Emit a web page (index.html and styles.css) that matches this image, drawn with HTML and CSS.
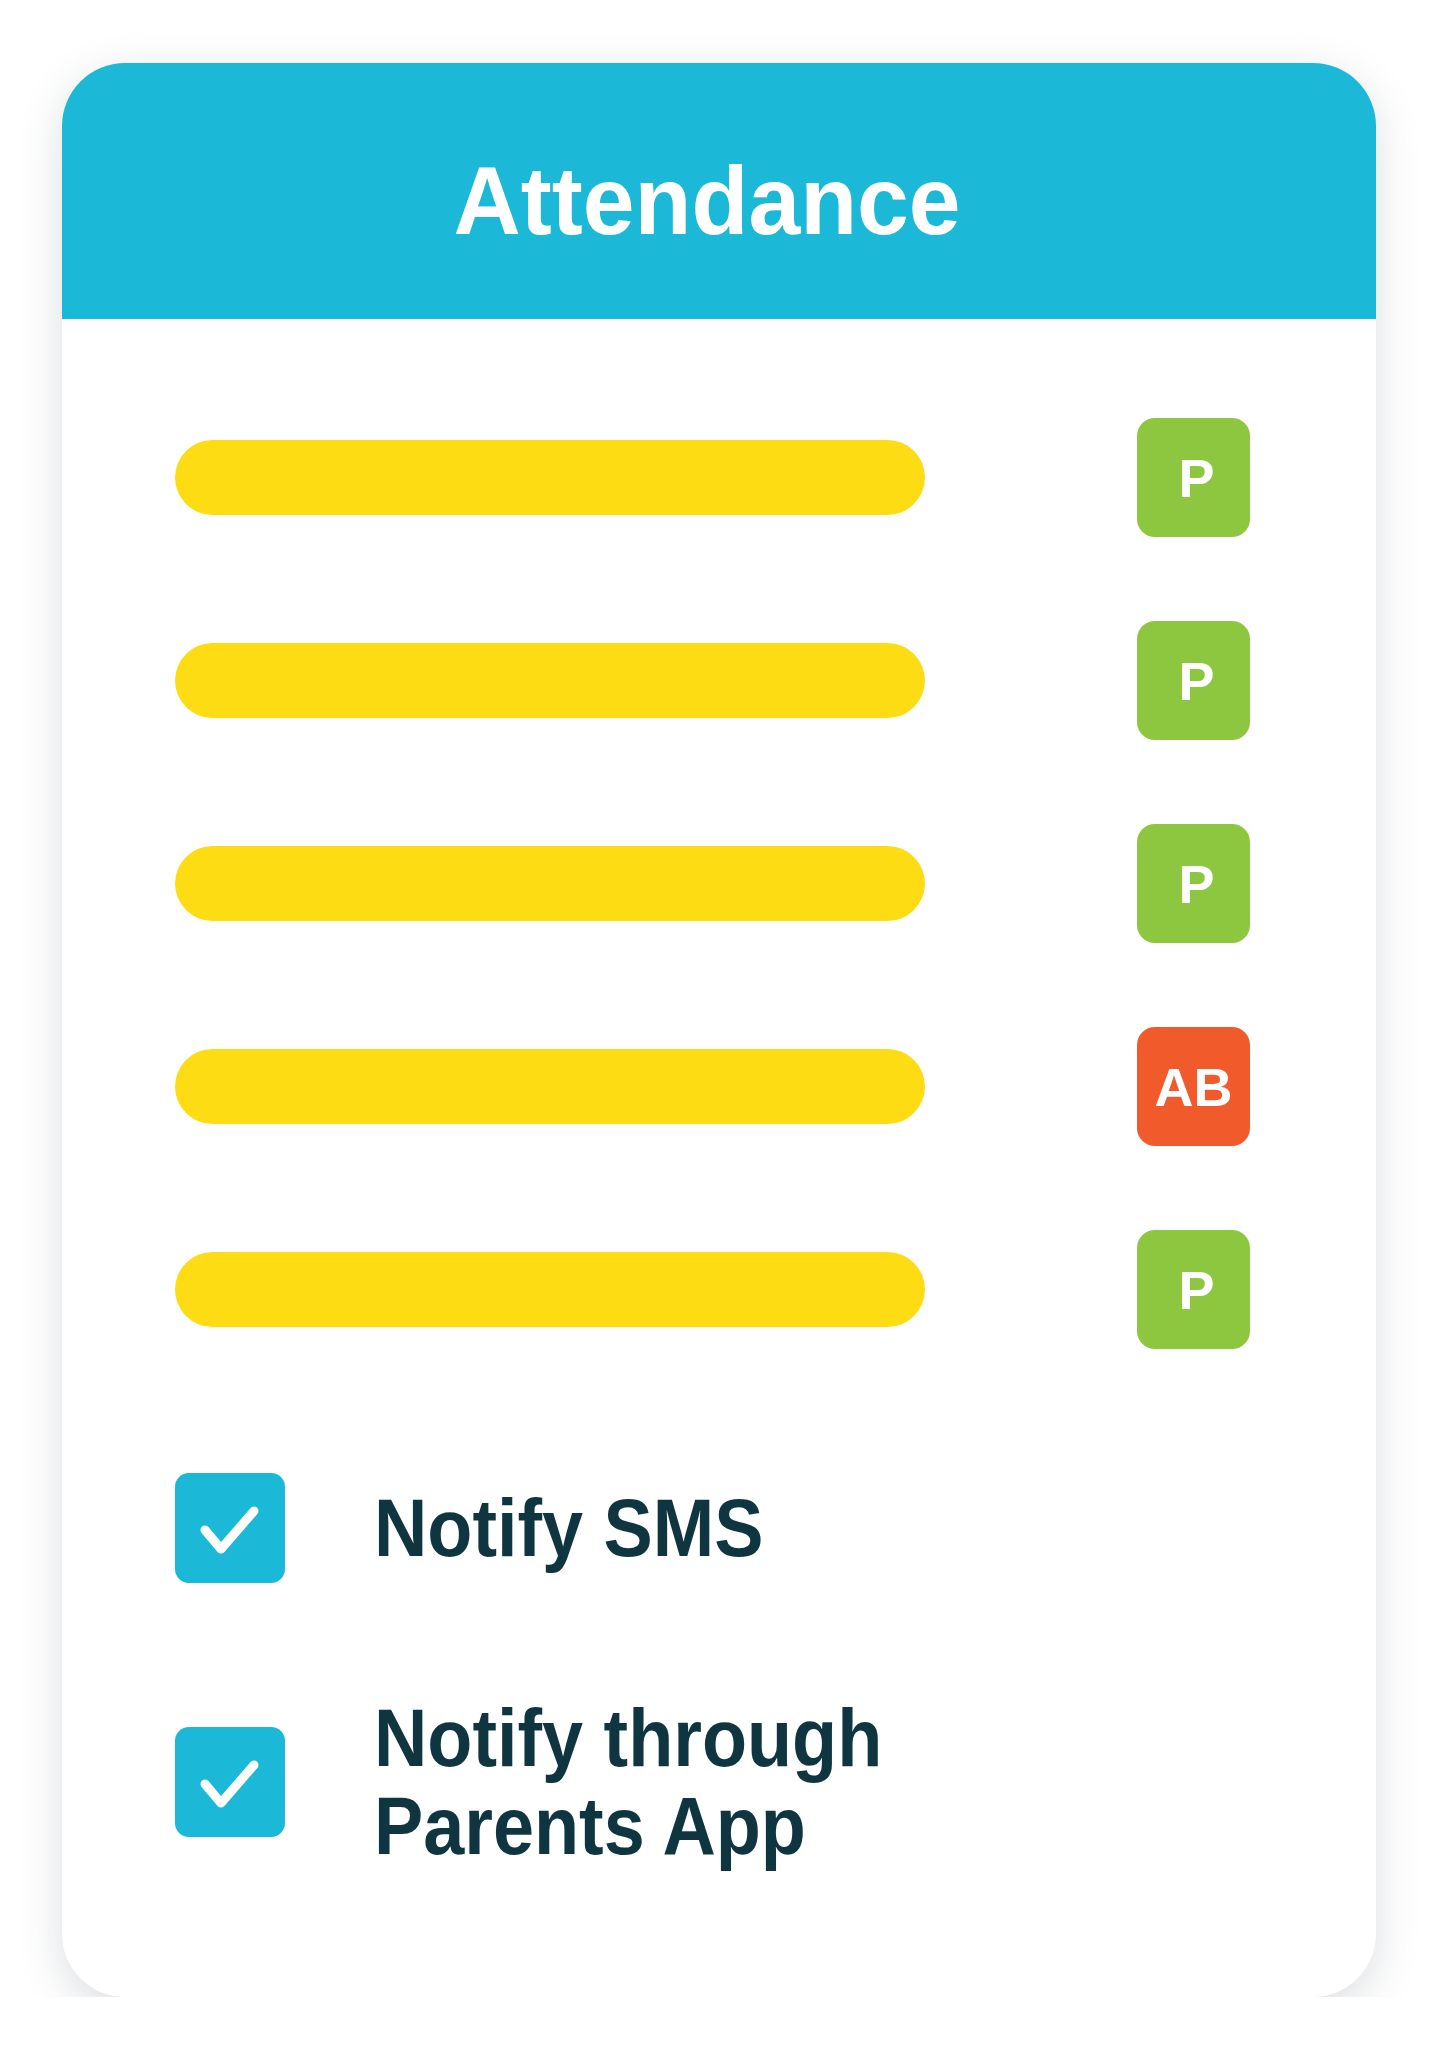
FILE: index.html
```html
<!DOCTYPE html>
<html lang="en">
<head>
<meta charset="utf-8">
<title>Attendance</title>
<link rel="stylesheet" href="styles.css">
</head>
<body>
<div class="card">
  <div class="card-header">
    <h1 class="title">Attendance</h1>
  </div>
  <div class="card-body">
    <ul class="roster">
      <li class="row"><span class="bar"></span><span class="badge badge-present">P</span></li>
      <li class="row"><span class="bar"></span><span class="badge badge-present">P</span></li>
      <li class="row"><span class="bar"></span><span class="badge badge-present">P</span></li>
      <li class="row"><span class="bar"></span><span class="badge badge-absent">AB</span></li>
      <li class="row"><span class="bar"></span><span class="badge badge-present">P</span></li>
    </ul>
    <div class="options">
      <div class="option">
        <span class="checkbox">
          <svg viewBox="0 0 110 110" width="110" height="110"><path d="M30 57 L46 76 L79 38" fill="none" stroke="#fff" stroke-width="9" stroke-linecap="round" stroke-linejoin="round"/></svg>
        </span>
        <span class="option-label">Notify SMS</span>
      </div>
      <div class="option">
        <span class="checkbox">
          <svg viewBox="0 0 110 110" width="110" height="110"><path d="M30 57 L46 76 L79 38" fill="none" stroke="#fff" stroke-width="9" stroke-linecap="round" stroke-linejoin="round"/></svg>
        </span>
        <span class="option-label">Notify through<br>Parents App</span>
      </div>
    </div>
  </div>
</div>
</body>
</html>
```

FILE: styles.css
```css
html, body {
  margin: 0;
  padding: 0;
  background: #ffffff;
}

body {
  font-family: "Liberation Sans", Arial, sans-serif;
  padding: 63px 0 0 62px;
}

.card {
  width: 1314px;
  height: 1934px;
  background: #ffffff;
  border-radius: 63px;
  overflow: hidden;
  box-shadow: 0 12px 44px rgba(40, 60, 70, 0.17);
  display: flex;
  flex-direction: column;
}

.card-header {
  height: 256px;
  box-sizing: border-box;
  background: #1bb9d7;
  padding: 89px 24px 0 0;
  text-align: center;
}

.title {
  display: inline-block;
  margin: 0;
  color: #ffffff;
  font-family: "Liberation Sans", Arial, sans-serif;
  font-weight: 700;
  font-size: 97px;
  line-height: 97px;
  transform: scaleX(0.96);
  transform-origin: center;
}

.card-body {
  padding: 99px 126px 0 113px;
}

.roster {
  list-style: none;
  margin: 0;
  padding: 0;
  display: flex;
  flex-direction: column;
  gap: 84px;
}

.row {
  display: flex;
  align-items: center;
  justify-content: space-between;
  height: 119px;
}

.bar {
  display: block;
  width: 750px;
  height: 75px;
  border-radius: 38px;
  background: #fddc14;
}

.badge {
  display: flex;
  align-items: center;
  justify-content: center;
  width: 113px;
  height: 119px;
  border-radius: 18px;
  color: #ffffff;
  font-family: "Liberation Sans", Arial, sans-serif;
  font-weight: 700;
  font-size: 54px;
}

.badge-present {
  background: #8dc63f;
  padding-left: 6px;
  box-sizing: border-box;
}

.badge-absent {
  background: #f15a2b;
}

.options {
  margin-top: 124px;
  display: flex;
  flex-direction: column;
  gap: 111px;
}

.option {
  display: flex;
  align-items: center;
  gap: 89px;
}

.checkbox {
  flex: none;
  width: 110px;
  height: 110px;
  border-radius: 14px;
  background: #1bb9d7;
  display: block;
}

.checkbox svg {
  display: block;
}

.option-label {
  display: inline-block;
  color: #0f3640;
  font-family: "Liberation Sans", Arial, sans-serif;
  font-weight: 700;
  font-size: 82px;
  line-height: 88px;
  white-space: nowrap;
  transform: scaleX(0.9);
  transform-origin: left center;
}
```
